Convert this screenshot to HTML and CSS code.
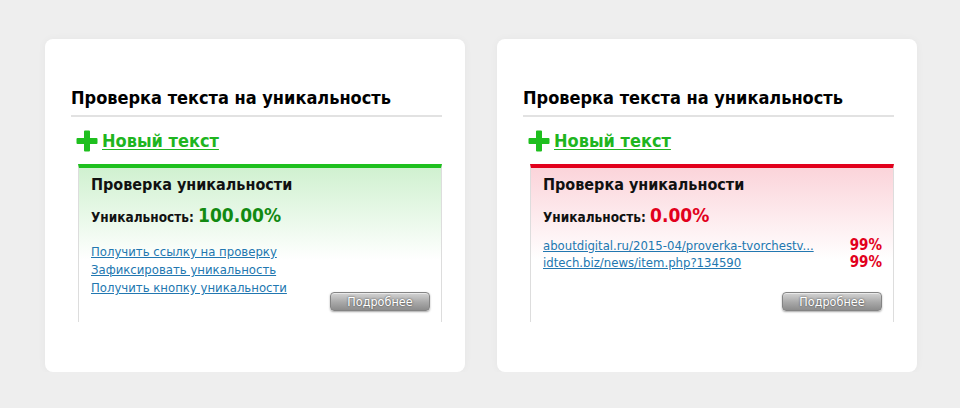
FILE: index.html
```html
<!DOCTYPE html>
<html lang="ru">
<head>
<meta charset="utf-8">
<title>Проверка текста на уникальность</title>
<link rel="stylesheet" href="styles.css">
</head>
<body>
<div class="page">
  <section class="card">
    <h2 class="title">Проверка текста на уникальность</h2>
    <div class="new-row">
      <svg class="plus" width="22" height="22" viewBox="0 0 22 22"><path d="M8 1.5a1 1 0 0 1 1-1h4a1 1 0 0 1 1 1V8h6.5a1 1 0 0 1 1 1v4a1 1 0 0 1-1 1H14v6.5a1 1 0 0 1-1 1H9a1 1 0 0 1-1-1V14H1.5a1 1 0 0 1-1-1V9a1 1 0 0 1 1-1H8z" fill="#1fbf1f"/></svg>
      <a class="new-link" href="#">Новый текст</a>
    </div>
    <div class="box box-ok">
      <h3 class="box-title">Проверка уникальности</h3>
      <div class="uniq">Уникальность: <span class="val val-ok">100.00%</span></div>
      <div class="box-foot">
        <ul class="links">
          <li><a href="#">Получить ссылку на проверку</a></li>
          <li><a href="#">Зафиксировать уникальность</a></li>
          <li><a href="#">Получить кнопку уникальности</a></li>
        </ul>
        <button class="more">Подробнее</button>
      </div>
    </div>
  </section>
  <section class="card">
    <h2 class="title">Проверка текста на уникальность</h2>
    <div class="new-row">
      <svg class="plus" width="22" height="22" viewBox="0 0 22 22"><path d="M8 1.5a1 1 0 0 1 1-1h4a1 1 0 0 1 1 1V8h6.5a1 1 0 0 1 1 1v4a1 1 0 0 1-1 1H14v6.5a1 1 0 0 1-1 1H9a1 1 0 0 1-1-1V14H1.5a1 1 0 0 1-1-1V9a1 1 0 0 1 1-1H8z" fill="#1fbf1f"/></svg>
      <a class="new-link" href="#">Новый текст</a>
    </div>
    <div class="box box-bad">
      <h3 class="box-title">Проверка уникальности</h3>
      <div class="uniq">Уникальность: <span class="val val-bad">0.00%</span></div>
      <ul class="matches">
        <li><a href="#">aboutdigital.ru/2015-04/proverka-tvorchestv...</a><span class="pct">99%</span></li>
        <li><a href="#">idtech.biz/news/item.php?134590</a><span class="pct">99%</span></li>
      </ul>
      <button class="more more-end">Подробнее</button>
    </div>
  </section>
</div>
</body>
</html>
```

FILE: styles.css
```css
html, body {
  margin: 0;
  padding: 0;
}
body {
  background: #eeeeee;
  font-family: "DejaVu Sans Condensed", "DejaVu Sans", Verdana, sans-serif;
  font-stretch: condensed;
  color: #000;
}
.page {
  display: flex;
  gap: 32px;
  padding: 39px 0 0 45px;
}
.card {
  width: 420px;
  height: 333px;
  box-sizing: border-box;
  background: #fff;
  border-radius: 8px;
  box-shadow: 0 0 8px rgba(0, 0, 0, 0.04);
  padding: 48px 23px 0 26px;
  display: flex;
  flex-direction: column;
}
.title {
  margin: 0;
  font-size: 18px;
  line-height: 22px;
  font-weight: bold;
  padding-bottom: 6px;
  border-bottom: 2px solid #e2e2e2;
  white-space: nowrap;
}
.new-row {
  display: flex;
  align-items: center;
  gap: 4px;
  margin: 13px 0 0 5px;
  height: 22px;
}
.plus {
  display: block;
  flex: none;
}
.new-link {
  font-size: 18px;
  line-height: 22px;
  font-weight: bold;
  color: #1fb51f;
  text-decoration: underline;
  text-underline-offset: 2px;
}
.box {
  margin: 12px 0 0 7px;
  height: 158px;
  box-sizing: border-box;
  border-left: 1px solid #dddddd;
  border-right: 1px solid #dddddd;
  border-top: 4px solid;
  padding: 7px 11px 11px 12px;
  display: flex;
  flex-direction: column;
}
.box-ok {
  border-top-color: #1ec01e;
  background: linear-gradient(#d0f1d0, #ffffff 60%);
}
.box-bad {
  border-top-color: #e2001c;
  background: linear-gradient(#fbd4da, #ffffff 60%);
}
.box-title {
  margin: 0;
  font-size: 16px;
  line-height: 20px;
  font-weight: bold;
  color: #111;
}
.uniq {
  margin-top: 8px;
  font-size: 13.5px;
  line-height: 24px;
  font-weight: bold;
  color: #111;
}
.val {
  font-size: 19px;
}
.val-ok { color: #128a12; }
.val-bad { color: #e2001c; }
.box-foot {
  margin-top: auto;
  display: flex;
  justify-content: space-between;
  align-items: flex-end;
}
.links, .matches {
  list-style: none;
  margin: 0;
  padding: 0;
  font-size: 13px;
  line-height: 18px;
}
.links {
  padding-bottom: 14px;
}
.links a, .matches a {
  color: #2277b0;
  text-decoration: underline;
}
.matches {
  margin-top: 8px;
  line-height: 17px;
}
.matches li {
  display: flex;
  justify-content: space-between;
}
.pct {
  font-weight: bold;
  font-size: 15px;
  color: #e2001c;
}
.more {
  flex: none;
  width: 100px;
  height: 19px;
  padding: 0;
  border: 1px solid #848484;
  border-radius: 4px;
  background: linear-gradient(#d4d4d4, #a8a8a8 55%, #8c8c8c);
  box-shadow: 0 1px 2px rgba(0, 0, 0, 0.35), inset 0 1px 0 rgba(255, 255, 255, 0.5);
  font-family: "DejaVu Sans Condensed", "DejaVu Sans", Verdana, sans-serif;
  font-stretch: condensed;
  font-size: 12.5px;
  line-height: 17px;
  color: #fff;
  text-shadow: 0 0 2px rgba(0, 0, 0, 0.7);
}
.more-end {
  margin-top: auto;
  align-self: flex-end;
}
```
